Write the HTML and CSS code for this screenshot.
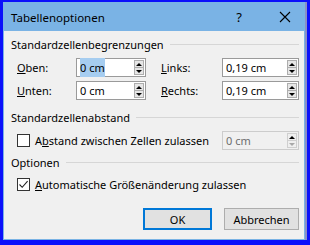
FILE: index.html
```html
<!DOCTYPE html>
<html lang="de">
<head>
<meta charset="utf-8">
<title>Tabellenoptionen</title>
<link rel="stylesheet" href="styles.css">
</head>
<body>
<div class="dialog">
  <div class="titlebar">
    <span class="title">Tabellenoptionen</span>
    <span class="help">?</span>
    <svg class="close" width="12" height="12" viewBox="0 0 12 12"><path d="M1 1L11 11M11 1L1 11" stroke="#000" stroke-width="1.1" fill="none"/></svg>
  </div>
  <div class="content">
    <div class="section-head s1"><span>Standardzellenbegrenzungen</span><span class="rule"></span></div>
    <div class="grid">
      <label class="lbl"><u>O</u>ben:</label>
      <div class="spin"><span class="val"><span class="sel">0 cm</span></span><span class="arrows"><span class="up"></span><span class="down"></span></span></div>
      <span></span>
      <label class="lbl"><u>L</u>inks:</label>
      <div class="spin"><span class="val">0,19 cm</span><span class="arrows"><span class="up"></span><span class="down"></span></span></div>

      <label class="lbl"><u>U</u>nten:</label>
      <div class="spin"><span class="val">0 cm</span><span class="arrows"><span class="up"></span><span class="down"></span></span></div>
      <span></span>
      <label class="lbl"><u>R</u>echts:</label>
      <div class="spin"><span class="val">0,19 cm</span><span class="arrows"><span class="up"></span><span class="down"></span></span></div>
    </div>

    <div class="section-head s2"><span>Standardzellenabstand</span><span class="rule"></span></div>
    <div class="check-row">
      <span class="box"></span>
      <span class="ctext">A<u>b</u>stand zwischen Zellen zulassen</span>
      <div class="spin disabled"><span class="val">0 cm</span><span class="arrows"><span class="up"></span><span class="down"></span></span></div>
    </div>

    <div class="section-head s3"><span>Optionen</span><span class="rule"></span></div>
    <div class="check-row r2">
      <span class="box"><svg width="11" height="11" viewBox="0 0 11 11"><path d="M1.5 5.5L4.2 8.3L9.6 2.2" stroke="#222" stroke-width="1.1" fill="none"/></svg></span>
      <span class="ctext"><u>A</u>utomatische Größenänderung zulassen</span>
    </div>

    <div class="buttons">
      <button class="btn default">OK</button>
      <button class="btn">Abbrechen</button>
    </div>
  </div>
</div>
</body>
</html>
```

FILE: styles.css
```css
html, body {
  margin: 0;
  padding: 0;
}
body {
  width: 310px;
  height: 245px;
  background: #0b10fb;
  font-family: "Noto Sans", "Open Sans", sans-serif;
  font-size: 11px;
  color: #000;
  overflow: hidden;
  padding: 2px 0 0 3px;
  box-sizing: border-box;
}
.dialog {
  width: 302px;
  height: 238px;
  box-sizing: border-box;
  border: 1px solid #7ab3e5;
  border-top: 0;
  background: #f0f0f0;
  box-shadow: 2px 0 0 #8a8fc6;
  display: flex;
  flex-direction: column;
}
.titlebar {
  height: 29px;
  background: #7ab3e5;
  display: flex;
  align-items: center;
  padding-left: 8px;
  margin: 0 -1px;
  font-size: 11.5px;
}
.title {
  flex: 1;
  padding-top: 1px;
}
.help {
  font-size: 13px;
  margin-right: 37px;
}
.close {
  margin-right: 14px;
}
.content {
  padding: 0 5px 0 7px;
  display: flex;
  flex-direction: column;
}
.section-head {
  display: flex;
  align-items: center;
  height: 16px;
  margin-top: 7px;
}
.section-head.s1 {
  margin-top: 5px;
}
.section-head .rule {
  flex: 1;
  height: 1px;
  background: #d6d6d6;
  margin-left: 6px;
}
.grid {
  display: grid;
  grid-template-columns: 59px 70px 15px 61px 77px;
  grid-auto-rows: 19px;
  row-gap: 4px;
  margin-top: 6px;
  padding-left: 6px;
}
.lbl {
  display: flex;
  align-items: center;
}
.spin {
  display: flex;
  border: 1px solid #9a9a9a;
  background: #fff;
  box-sizing: border-box;
  height: 19px;
  align-items: center;
  padding-left: 3px;
}
.val {
  flex: 1;
  white-space: nowrap;
}
.sel {
  background: #a6cdf0;
  padding: 2px 0;
}
.arrows {
  width: 10px;
  height: 15px;
  margin-right: 1px;
  display: flex;
  flex-direction: column;
  border: 1px solid #adadad;
  background: #e6e6e6;
  box-sizing: border-box;
}
.arrows span {
  flex: 1;
  position: relative;
}
.arrows .up {
  border-bottom: 1px solid #adadad;
}
.arrows .up::after,
.arrows .down::after {
  content: "";
  position: absolute;
  left: 1px;
  width: 0;
  height: 0;
  border-left: 3px solid transparent;
  border-right: 3px solid transparent;
}
.arrows .up::after {
  top: 2px;
  border-bottom: 3px solid #000;
}
.arrows .down::after {
  top: 2px;
  border-top: 3px solid #000;
}
.spin.disabled {
  border-color: #cccccc;
  background: #f0f0f0;
  color: #6d6d6d;
}
.spin.disabled .arrows {
  border-color: #cfcfcf;
  background: #efefef;
}
.spin.disabled .arrows .up {
  border-bottom-color: #cfcfcf;
}
.spin.disabled .arrows .down::after {
  border-top-color: #a8a8a8;
}
.section-head.s2 {
  margin-top: 9px;
}
.check-row {
  display: flex;
  align-items: center;
  height: 19px;
  margin-top: 6px;
  padding-left: 6px;
}
.box {
  width: 13px;
  height: 13px;
  border: 1px solid #333;
  background: #fff;
  box-sizing: border-box;
  display: flex;
  align-items: center;
  justify-content: center;
  flex: none;
}
.ctext {
  margin-left: 5px;
  flex: 1;
  white-space: nowrap;
}
.check-row .spin {
  width: 77px;
  flex: none;
}
.section-head.s3 {
  margin-top: 4px;
}
.check-row.r2 {
  margin-top: 5px;
}
.buttons {
  display: flex;
  justify-content: flex-end;
  gap: 12px;
  margin-top: 14px;
}
.btn {
  font-family: inherit;
  font-size: 11px;
  height: 22px;
  background: #e1e1e1;
  border: 1px solid #adadad;
  padding: 0;
  color: #000;
}
.btn.default {
  width: 69px;
  border: 2px solid #0078d7;
}
.btn:not(.default) {
  width: 75px;
}
```
